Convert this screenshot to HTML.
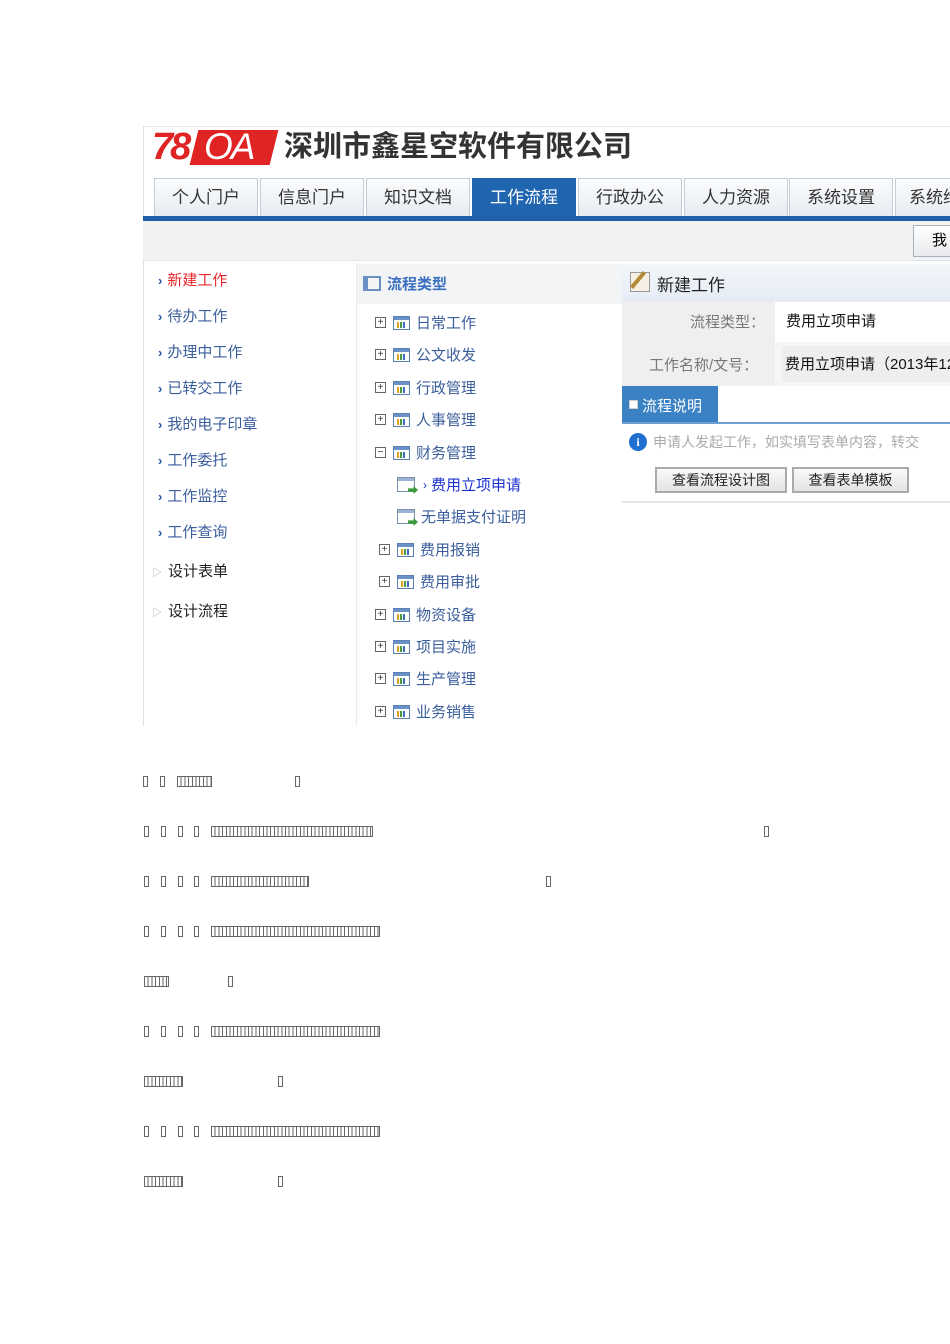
<!DOCTYPE html>
<html><head><meta charset="utf-8"><style>
*{margin:0;padding:0;box-sizing:border-box}
body{width:950px;height:1344px;background:#fff;position:relative;overflow:hidden;font-family:"Liberation Sans","Noto Sans CJK SC",sans-serif}
.a{position:absolute;white-space:nowrap}
.t{position:absolute;height:11px;border:1px solid #666;border-left:1px solid #666;background:repeating-linear-gradient(90deg,transparent 0 2.7px,#666 2.7px 3.7px)}
.b{position:absolute;width:5px;height:11px;border:1px solid #666}
.tab{position:absolute;top:178px;height:39px;width:104px;background:linear-gradient(#fbfcfd,#e6ebf1);border:1px solid #c3cdd8;border-bottom:none;font-size:17px;color:#333;text-align:center;line-height:38px}
.li{position:absolute;left:158px;font-size:15px;color:#3b5e9c}
.li:before{content:"›";color:#2457a6;font-weight:bold;margin-right:5px;font-size:13px}
.tr{position:absolute;font-size:15px;color:#3b5e9c;display:flex;align-items:center}
.pl{width:11px;height:11px;border:1px solid #666;font-size:10px;line-height:9px;text-align:center;color:#333;margin-right:7px;background:#fff}
.ic{width:17px;height:14px;border:1px solid #5a7fb5;background:linear-gradient(#6a90c8 0 3px,#fff 3px);margin-right:6px;position:relative}
.ic:after{content:"";position:absolute;left:3px;top:5px;width:9px;height:6px;background:repeating-linear-gradient(90deg,#e0a020 0 2px,#fff 2px 3px,#4a9a40 3px 5px,#fff 5px 6px,#3b6fc0 6px 8px,#fff 8px 9px)}
.ic2{width:18px;height:15px;border:1px solid #7a8fae;background:linear-gradient(#9cb3d5 0 3px,#fff 3px);margin-right:4px;position:relative}
.ic2:after{content:"";position:absolute;right:-4px;bottom:-3px;width:10px;height:8px;background:#3d9a3a;clip-path:polygon(0 30%,55% 30%,55% 0,100% 50%,55% 100%,55% 70%,0 70%)}
.btn{position:absolute;top:467px;height:26px;border:2px solid #aaa;background:linear-gradient(#fafafa,#e4e4e4);font-size:14px;color:#222;text-align:center;line-height:22px}
</style></head><body>
<div class="a" style="left:143px;top:126px;width:807px;height:1px;background:#e6e9ee"></div>
<div class="a" style="left:143px;top:126px;width:1px;height:600px;background:#dde2e8"></div>
<div class="a" style="left:194px;top:130px;width:80px;height:35px;background:#e02424;transform:skewX(-14deg)"></div>
<div class="a" style="left:152px;top:126px;font:italic bold 38px 'Liberation Sans';color:#e02424;letter-spacing:-3px;line-height:42px">78</div>
<div class="a" style="left:204px;top:126px;font:italic 37px 'Liberation Sans';color:#fff;letter-spacing:-2px;line-height:42px">OA</div>
<div class="a" style="left:284px;top:128px;font-size:29px;font-weight:bold;color:#333;line-height:38px">深圳市鑫星空软件有限公司</div>
<div class="tab" style="left:154px">个人门户</div>
<div class="tab" style="left:260px">信息门户</div>
<div class="tab" style="left:366px">知识文档</div>
<div class="tab" style="left:472px;background:#1f65b0;color:#fff;border-color:#1f65b0">工作流程</div>
<div class="tab" style="left:578px">行政办公</div>
<div class="tab" style="left:684px">人力资源</div>
<div class="tab" style="left:789px">系统设置</div>
<div class="tab" style="left:895px;text-align:left;padding-left:13px">系统维护</div>
<div class="a" style="left:143px;top:216px;width:807px;height:5px;background:#1f5fa8"></div>
<div class="a" style="left:143px;top:221px;width:807px;height:40px;background:#f0f2f4;border-bottom:1px solid #e2e5e9"></div>
<div class="a" style="left:913px;top:225px;width:50px;height:32px;border:1px solid #a8b0ba;background:linear-gradient(#fff,#e8eaed);font-size:15px;line-height:30px;padding-left:18px">我</div>
<div class="li" style="top:269px;color:#e8262a">新建工作</div>
<div class="li" style="top:305px">待办工作</div>
<div class="li" style="top:341px">办理中工作</div>
<div class="li" style="top:377px">已转交工作</div>
<div class="li" style="top:413px">我的电子印章</div>
<div class="li" style="top:449px">工作委托</div>
<div class="li" style="top:485px">工作监控</div>
<div class="li" style="top:521px">工作查询</div>
<div class="a" style="left:152px;top:560px;font-size:15px;color:#222"><span style="color:#aaa;font-size:10px;margin-right:6px">▷</span>设计表单</div>
<div class="a" style="left:152px;top:600px;font-size:15px;color:#222"><span style="color:#aaa;font-size:10px;margin-right:6px">▷</span>设计流程</div>
<div class="a" style="left:356px;top:263px;width:1px;height:463px;background:#e6e9ee"></div>
<div class="a" style="left:357px;top:264px;width:265px;height:40px;background:#f3f4f6"></div>
<div class="a" style="left:363px;top:276px;width:18px;height:15px;border:2px solid #6b8fc4;border-left-width:5px"></div>
<div class="a" style="left:387px;top:273px;font-size:15px;color:#3b6fbf;font-weight:bold">流程类型</div>
<div class="tr" style="left:375px;top:312px"><span class="pl">+</span><span class="ic"></span>日常工作</div>
<div class="tr" style="left:375px;top:344px"><span class="pl">+</span><span class="ic"></span>公文收发</div>
<div class="tr" style="left:375px;top:377px"><span class="pl">+</span><span class="ic"></span>行政管理</div>
<div class="tr" style="left:375px;top:409px"><span class="pl">+</span><span class="ic"></span>人事管理</div>
<div class="tr" style="left:375px;top:442px"><span class="pl">−</span><span class="ic"></span>财务管理</div>
<div class="tr" style="left:397px;top:474px;color:#1b2fd0"><span class="ic2"></span><span style="margin:0 4px 0 4px;font-size:12px">›</span>费用立项申请</div>
<div class="tr" style="left:397px;top:506px"><span class="ic2" style="margin-right:6px"></span>无单据支付证明</div>
<div class="tr" style="left:379px;top:539px"><span class="pl">+</span><span class="ic"></span>费用报销</div>
<div class="tr" style="left:379px;top:571px"><span class="pl">+</span><span class="ic"></span>费用审批</div>
<div class="tr" style="left:375px;top:604px"><span class="pl">+</span><span class="ic"></span>物资设备</div>
<div class="tr" style="left:375px;top:636px"><span class="pl">+</span><span class="ic"></span>项目实施</div>
<div class="tr" style="left:375px;top:668px"><span class="pl">+</span><span class="ic"></span>生产管理</div>
<div class="tr" style="left:375px;top:701px"><span class="pl">+</span><span class="ic"></span>业务销售</div>
<div class="a" style="left:622px;top:264px;width:328px;height:38px;background:linear-gradient(#f3f6fa,#e5ecf4)"></div>
<div class="a" style="left:630px;top:272px;width:20px;height:20px;border:1px solid #999;background:#f6f1e4"></div>
<div class="a" style="left:636px;top:270px;width:4px;height:20px;background:#b48a3a;transform:rotate(40deg)"></div>
<div class="a" style="left:657px;top:271px;font-size:17px;color:#222">新建工作</div>
<div class="a" style="left:622px;top:302px;width:153px;height:84px;background:#efefef"></div>
<div class="a" style="left:775px;top:302px;width:175px;height:40px;background:#fff"></div>
<div class="a" style="left:775px;top:342px;width:175px;height:44px;background:#f6f6f6"></div>
<div class="a" style="left:782px;top:346px;width:168px;height:36px;background:#eee"></div>
<div class="a" style="left:690px;top:311px;font-size:15px;color:#777">流程类型：</div>
<div class="a" style="left:786px;top:310px;font-size:15px;color:#111">费用立项申请</div>
<div class="a" style="left:649px;top:354px;font-size:15px;color:#777">工作名称/文号：</div>
<div class="a" style="left:785px;top:353px;font-size:15px;color:#111">费用立项申请（2013年12</div>
<div class="a" style="left:622px;top:386px;width:96px;height:37px;background:#3a82c4"></div>
<div class="a" style="left:622px;top:422px;width:328px;height:2px;background:#6fa0d0"></div>
<div class="a" style="left:629px;top:400px;width:9px;height:9px;background:#fff;border:1px solid #ccc"></div>
<div class="a" style="left:642px;top:395px;font-size:15px;color:#fff">流程说明</div>
<div class="a" style="left:629px;top:433px;width:18px;height:18px;border-radius:50%;background:#1f6fd0;color:#fff;font:bold 12px 'Liberation Serif';text-align:center;line-height:18px">i</div>
<div class="a" style="left:653px;top:432px;font-size:14px;color:#aaa">申请人发起工作，如实填写表单内容，转交</div>
<div class="btn" style="left:655px;width:132px">查看流程设计图</div>
<div class="btn" style="left:792px;width:117px">查看表单模板</div>
<div class="a" style="left:622px;top:501px;width:328px;height:2px;background:#e4e4e4"></div>
<div class="b" style="left:143px;top:776px"></div><div class="b" style="left:160px;top:776px"></div><div class="t" style="left:177px;top:776px;width:35px"></div><div class="b" style="left:295px;top:776px"></div>
<div class="b" style="left:144px;top:826px"></div><div class="b" style="left:161px;top:826px"></div><div class="b" style="left:178px;top:826px"></div><div class="b" style="left:194px;top:826px"></div><div class="t" style="left:211px;top:826px;width:162px"></div><div class="b" style="left:764px;top:826px"></div>
<div class="b" style="left:144px;top:876px"></div><div class="b" style="left:161px;top:876px"></div><div class="b" style="left:178px;top:876px"></div><div class="b" style="left:194px;top:876px"></div><div class="t" style="left:211px;top:876px;width:98px"></div><div class="b" style="left:546px;top:876px"></div>
<div class="b" style="left:144px;top:926px"></div><div class="b" style="left:161px;top:926px"></div><div class="b" style="left:178px;top:926px"></div><div class="b" style="left:194px;top:926px"></div><div class="t" style="left:211px;top:926px;width:169px"></div>
<div class="t" style="left:144px;top:976px;width:25px"></div><div class="b" style="left:228px;top:976px"></div>
<div class="b" style="left:144px;top:1026px"></div><div class="b" style="left:161px;top:1026px"></div><div class="b" style="left:178px;top:1026px"></div><div class="b" style="left:194px;top:1026px"></div><div class="t" style="left:211px;top:1026px;width:169px"></div>
<div class="t" style="left:144px;top:1076px;width:39px"></div><div class="b" style="left:278px;top:1076px"></div>
<div class="b" style="left:144px;top:1126px"></div><div class="b" style="left:161px;top:1126px"></div><div class="b" style="left:178px;top:1126px"></div><div class="b" style="left:194px;top:1126px"></div><div class="t" style="left:211px;top:1126px;width:169px"></div>
<div class="t" style="left:144px;top:1176px;width:39px"></div><div class="b" style="left:278px;top:1176px"></div>
</body></html>
